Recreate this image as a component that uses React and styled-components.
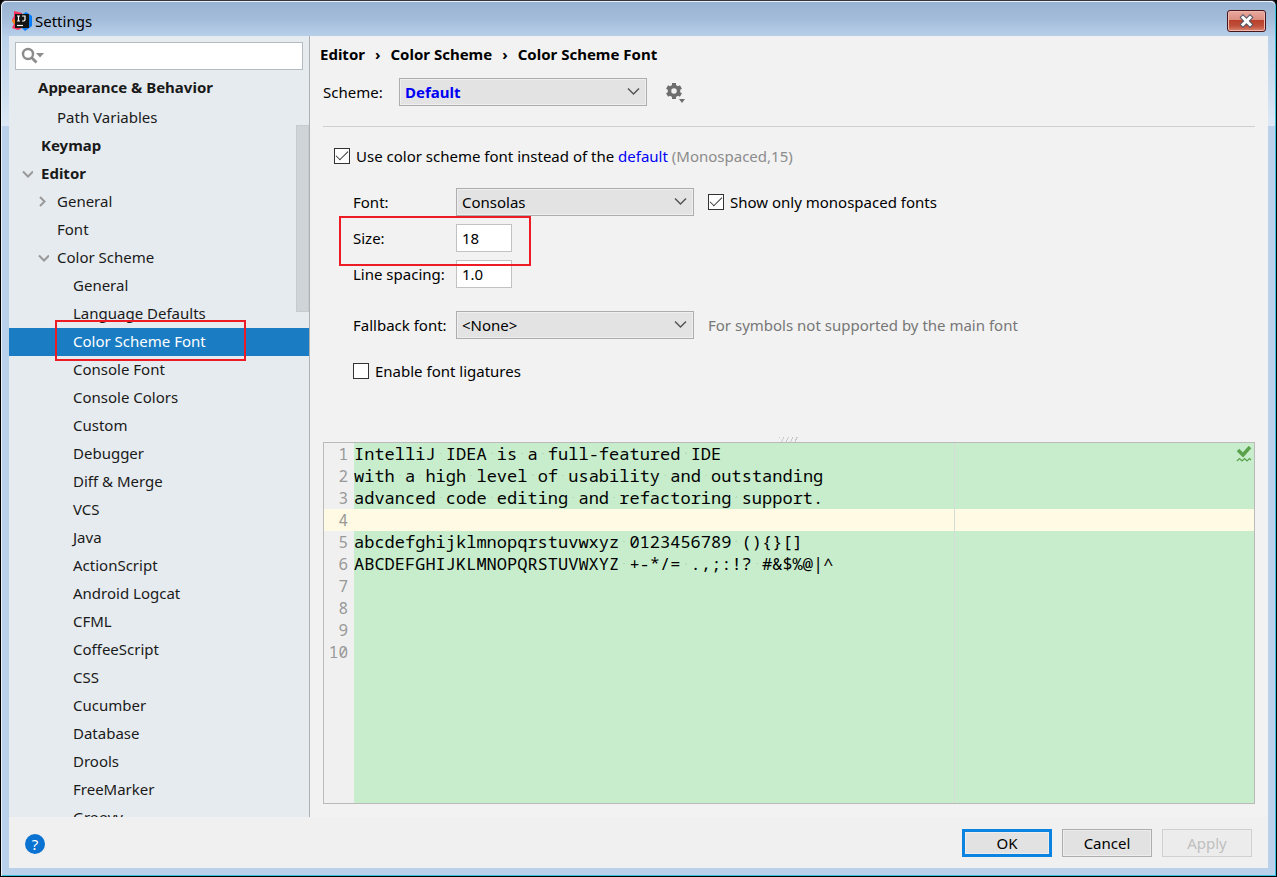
import { useState } from "react"
import styled, { createGlobalStyle, css } from "styled-components"

const GlobalStyle = createGlobalStyle`
  * { box-sizing: border-box; }
  body {
    margin: 0;
    background: #000;
  }
  body, button, input, select {
    font-family: "Noto Sans", "Open Sans", sans-serif;
    font-size: 15px;
    line-height: 20px;
    color: #000;
  }
`

const Window = styled.div`
  height: 100vh;
  display: flex;
  flex-direction: column;
  padding: 0 8px 8px;
  border: 1px solid #000;
  border-top-color: #38333b;
  border-radius: 6px 6px 0 0;
  background: linear-gradient(#b9d1ea, #dce8f5) 0 35px / 100% 90px no-repeat, #b9d1ea;
  box-shadow: inset 1px 1px 0 #e8f1fa, inset -1px -1px 0 #35c2dc;
`

const TitleBar = styled.header`
  flex: none;
  height: 35px;
  margin: 0 -7px;
  padding: 4px 9px 0 10px;
  display: flex;
  align-items: center;
  gap: 3px;
  background: linear-gradient(#98b3d2, #a3bcd9 50%, #b7cfe9);
  border-top: 1px solid #e8f1fa;
  border-radius: 5px 5px 0 0;
`

const Title = styled.h1`
  flex: 1;
  margin: 0;
  font-size: 15px;
  font-weight: 400;
`

const CloseButton = styled.button`
  width: 39px;
  height: 22px;
  padding: 0;
  display: flex;
  align-items: center;
  justify-content: center;
  border: 1px solid #47151c;
  border-radius: 3px;
  background: linear-gradient(#e9a99f, #dc8d80 45%, #b8402b 46%, #c0503a 75%, #dc8571);
  box-shadow: inset 0 0 0 1px #f0b9ae;
`

const Body = styled.div`
  flex: 1;
  min-height: 0;
  display: flex;
  background: #f2f2f2;
`

const Sidebar = styled.nav`
  flex: none;
  width: 301px;
  display: flex;
  flex-direction: column;
  position: relative;
  overflow: hidden;
  padding-top: 6px;
  background: #e6ebef;
  border-right: 1px solid #aeb1b4;
`

const SearchBox = styled.label`
  flex: none;
  height: 28px;
  margin: 0 6px 4px;
  padding-left: 5px;
  display: flex;
  align-items: center;
  background: #fff;
  border: 1px solid #b5bbc0;
`

const SearchInput = styled.input`
  flex: 1;
  min-width: 0;
  height: 24px;
  border: 0;
  outline: 0;
  background: transparent;
`

const Tree = styled.ul`
  flex: 1;
  min-height: 0;
  margin: 0;
  padding: 0;
  list-style: none;
  overflow: hidden;
`

const indents = { top: 29, key: 32, node: 48, leaf: 64 }

const TreeRow = styled.li`
  position: relative;
  height: ${(p) => (p.$level === "top" ? 30 : 28)}px;
  padding: 0 0 ${(p) => (p.$level === "top" ? 4 : 2)}px ${(p) => indents[p.$level]}px;
  display: flex;
  align-items: center;
  white-space: nowrap;
  color: ${(p) => (p.$selected ? "#fff" : "#1a1a1a")};
  font-weight: ${(p) => (p.$level === "top" || p.$level === "key" ? 700 : 400)};
  background: ${(p) => (p.$selected ? "#1a7dc4" : "transparent")};
`

const TreeArrow = styled.svg`
  flex: none;
  width: 12px;
  height: 12px;
  margin-left: -20px;
  margin-right: 8px;
`

const ScrollThumb = styled.div`
  position: absolute;
  top: 89px;
  right: 0;
  width: 13px;
  height: 187px;
  background: #cfd4d8;
  border: 1px solid #c6cbcf;
`

const RedMark = styled.div`
  position: absolute;
  inset: ${(p) => p.$inset};
  width: ${(p) => p.$width}px;
  border: 2px solid #ed1c24;
  pointer-events: none;
  z-index: 1;
`

const Main = styled.main`
  flex: 1;
  min-width: 0;
  display: flex;
  flex-direction: column;
  padding: 8px 13px 13px;
`

const Breadcrumb = styled.h2`
  display: flex;
  gap: 10px;
  margin: 0 0 14px -3px;
  font-size: 15px;
  font-weight: 700;
`

const SchemeRow = styled.div`
  display: flex;
  align-items: center;
  padding-bottom: 20px;
  border-bottom: 1px solid #cfcfcf;
`

const SchemeLabel = styled.label`
  width: 76px;
`

const SelectBox = styled.span`
  position: relative;
  width: ${(p) => p.$width}px;
  svg {
    position: absolute;
    right: 6px;
    top: 9px;
    pointer-events: none;
  }
`

const Select = styled.select`
  appearance: none;
  display: block;
  width: 100%;
  height: 28px;
  padding: 0 24px 0 5px;
  border: 1px solid #adadad;
  border-radius: 0;
  outline: 0;
  background: #e3e3e3;
  box-shadow: inset 0 0 0 1px #efefef;
  ${(p) => p.$strong && css`
    font-weight: 700;
    color: #0000f5;
  `}
`

const GearButton = styled.button`
  display: flex;
  margin-left: 18px;
  padding: 0;
  border: 0;
  background: none;
`

const CheckLabel = styled.label`
  display: flex;
  align-items: center;
  gap: 6px;
  white-space: pre;
`

const CheckInput = styled.input`
  appearance: none;
  flex: none;
  width: 16px;
  height: 16px;
  margin: 0;
  border: 1px solid #333;
  background: #fff;
  display: grid;
  place-items: center;
  &:checked::before {
    content: "";
    width: 11px;
    height: 5px;
    border: solid #333;
    border-width: 0 0 1px 1px;
    transform: translateY(-2px) rotate(-45deg);
  }
`

const DefaultLink = styled.a`
  color: #0000f5;
  text-decoration: none;
`

const Hint = styled.span`
  color: ${(p) => p.$color || "#8c8c8c"};
`

const UseSchemeFont = styled.div`
  padding: 19px 0 22px 11px;
`

const Form = styled.form`
  display: grid;
  grid-template-columns: 103px 1fr;
  row-gap: 8px;
  padding-left: 30px;
  align-items: center;
`

const Field = styled.div`
  display: contents;
`

const FieldLabel = styled.label`
  position: relative;
  white-space: nowrap;
  margin-top: ${(p) => (p.$spaced ? 15 : 0)}px;
`

const FieldValue = styled.div`
  display: flex;
  align-items: center;
  gap: 14px;
  margin-top: ${(p) => (p.$spaced ? 15 : 0)}px;
`

const NumberInput = styled.input`
  width: 56px;
  height: 28px;
  padding: 0 5px;
  border: 1px solid #c2c2c2;
  outline: 0;
  background: #fff;
`

const Ligatures = styled.div`
  padding: 22px 0 0 30px;
`

const Grip = styled.div`
  height: 5px;
  width: 20px;
  margin: 56px auto 0;
  background: repeating-linear-gradient(115deg, #c9c9c9 0 1px, #f2f2f2 1px 4px);
`

const rightMargin = css`
  background-image: linear-gradient(#d5dbd5, #d5dbd5);
  background-size: 1px 100%;
  background-repeat: no-repeat;
`

const Editor = styled.section`
  flex: 1;
  min-height: 0;
  display: flex;
  position: relative;
  border: 1px solid #bababa;
  font-family: "Noto Sans Mono", "DejaVu Sans Mono", monospace;
  font-size: 17px;
  line-height: 22px;
`

const Gutter = styled.div`
  flex: none;
  width: 30px;
  background: #f0f0f0;
  color: #999;
  text-align: right;
`

const LineNumber = styled.div`
  height: 22px;
  padding-right: 6px;
  font-size: 16px;
  background: ${(p) => (p.$caret ? "#fffae3" : "none")};
`

const Code = styled.div`
  flex: 1;
  min-width: 0;
  overflow: hidden;
  background-color: #c7edcc;
  ${rightMargin}
  background-position: 600px 0;
`

const CodeLine = styled.div`
  height: 22px;
  white-space: pre;
  ${(p) => p.$caret && css`
    background-color: #fffae3;
    ${rightMargin}
    background-position: 600px 0;
  `}
`

const Space = styled.span`
  background: radial-gradient(circle, #b4dcba 1px, transparent 1px);
`

const Status = styled.svg`
  position: absolute;
  top: 3px;
  right: 2px;
`

const Footer = styled.footer`
  flex: none;
  height: 51px;
  padding: 0 16px;
  display: flex;
  align-items: center;
  gap: 10px;
  background: #f0f0f0;
`

const HelpButton = styled.button`
  width: 20px;
  height: 20px;
  margin: 3px auto 0 0;
  padding: 0;
  border: 0;
  border-radius: 50%;
  background: #0a72d0;
  color: #fff;
  line-height: 20px;
`

const DialogButton = styled.button`
  width: 90px;
  height: 28px;
  padding: 0;
  border: ${(p) => (p.$primary ? "3px solid #0a84e0" : "1px solid #adadad")};
  background: #e2e2e2;
  box-shadow: inset 0 0 0 1px #ededed;
  &:disabled {
    color: #bfbfbf;
    border-color: #d0d0d0;
    background: #ececec;
  }
`

const settings = [
  { name: "Appearance & Behavior", level: "top" },
  { name: "Path Variables", level: "node" },
  { name: "Keymap", level: "key" },
  { name: "Editor", level: "key", arrow: "down" },
  { name: "General", level: "node", arrow: "right" },
  { name: "Font", level: "node" },
  { name: "Color Scheme", level: "node", arrow: "down" },
  ...[
    "General", "Language Defaults", "Color Scheme Font", "Console Font", "Console Colors",
    "Custom", "Debugger", "Diff & Merge", "VCS", "Java", "ActionScript", "Android Logcat",
    "CFML", "CoffeeScript", "CSS", "Cucumber", "Database", "Drools", "FreeMarker", "Groovy",
  ].map((name) => ({ name, level: "leaf" })),
]

const sample = [
  "IntelliJ IDEA is a full-featured IDE",
  "with a high level of usability and outstanding",
  "advanced code editing and refactoring support.",
  "",
  "abcdefghijklmnopqrstuvwxyz 0123456789 (){}[]",
  "ABCDEFGHIJKLMNOPQRSTUVWXYZ +-*/= .,;:!? #&$%@|^",
  "", "", "", "",
]

const caretLine = 3

const Logo = () => (
  <svg width="20" height="20" viewBox="0 0 20 20" aria-hidden="true">
    <path d="M2 0l8 2v15l-4 2-6-2 2-4-2-4 2-4z" fill="#fe315d" />
    <path d="M0 9l4-1v6l-3-2z" fill="#f97a12" />
    <path d="M11 3l3-2 6 4v10l-7 5-3-3z" fill="#087cfa" />
    <rect x="3" y="3" width="14" height="14" fill="#151515" />
    <path d="M5 5h3M6.500 5v5M5 10h3M10 5h3v4l-1 1h-2" fill="none" stroke="#fff" strokeWidth="1.200" />
    <path d="M5 14.500h6" stroke="#fff" strokeWidth="1.200" />
  </svg>
)

const Arrow = ({ dir }) => (
  <TreeArrow viewBox="0 0 12 12" aria-hidden="true">
    <path d={dir === "down" ? "M2 4.500L7 9.500 12 4.500" : "M3 2L7.500 6.500 3 11"} fill="none" stroke="#999" strokeWidth="2" />
  </TreeArrow>
)

const Dropdown = ({ id, value, width, strong }) => (
  <SelectBox $width={width}>
    <Select id={id} $strong={strong}>
      <option>{value}</option>
    </Select>
    <svg width="14" height="10" viewBox="0 0 14 10" aria-hidden="true">
      <path d="M1 1.500L6.500 7l5.500-5.500" fill="none" stroke="#555" strokeWidth="1.500" />
    </svg>
  </SelectBox>
)

const withDots = (text) =>
  text.split(/( )/).map((part, i) => (part === " " ? <Space key={i}> </Space> : part))

const SettingsTree = () => (
  <Sidebar>
    <SearchBox>
      <svg width="24" height="18" viewBox="0 0 24 18" aria-hidden="true">
        <circle cx="7" cy="7" r="5" fill="none" stroke="#8c8c8c" strokeWidth="2.400" />
        <path d="M10.500 10.500l5 5" stroke="#8c8c8c" strokeWidth="2.800" />
        <path d="M15 6h8l-4 4.500z" fill="#8c8c8c" />
      </svg>
      <SearchInput type="text" aria-label="Search settings" />
    </SearchBox>
    <Tree>
      {settings.map((item, i) => {
        const selected = item.name === "Color Scheme Font"
        return (
          <TreeRow key={i} $level={item.level} $selected={selected}>
            {item.arrow && <Arrow dir={item.arrow} />}
            {item.name}
            {selected && <RedMark $inset="-8px auto -5px 46px" $width={191} />}
          </TreeRow>
        )
      })}
    </Tree>
    <ScrollThumb />
  </Sidebar>
)

const FontForm = () => {
  const [size, setSize] = useState("18")
  const [spacing, setSpacing] = useState("1.0")
  return (
    <Form>
      <Field>
        <FieldLabel htmlFor="font">Font:</FieldLabel>
        <FieldValue>
          <Dropdown id="font" value="Consolas" width={238} />
          <CheckLabel>
            <CheckInput type="checkbox" defaultChecked />
            Show only monospaced fonts
          </CheckLabel>
        </FieldValue>
      </Field>
      <Field>
        <FieldLabel htmlFor="size">
          Size:
          <RedMark $inset="-12px auto -18px -14px" $width={192} />
        </FieldLabel>
        <FieldValue>
          <NumberInput id="size" value={size} onChange={(e) => setSize(e.target.value)} />
        </FieldValue>
      </Field>
      <Field>
        <FieldLabel htmlFor="spacing">Line spacing:</FieldLabel>
        <FieldValue>
          <NumberInput id="spacing" value={spacing} onChange={(e) => setSpacing(e.target.value)} />
        </FieldValue>
      </Field>
      <Field>
        <FieldLabel htmlFor="fallback" $spaced>Fallback font:</FieldLabel>
        <FieldValue $spaced>
          <Dropdown id="fallback" value="<None>" width={238} />
          <Hint $color="#777">For symbols not supported by the main font</Hint>
        </FieldValue>
      </Field>
    </Form>
  )
}

const Preview = () => (
  <Editor>
    <Gutter>
      {sample.map((_, i) => (
        <LineNumber key={i} $caret={i === caretLine}>{i + 1}</LineNumber>
      ))}
    </Gutter>
    <Code>
      {sample.map((text, i) => (
        <CodeLine key={i} $caret={i === caretLine}>{withDots(text)}</CodeLine>
      ))}
    </Code>
    <Status width="16" height="17" viewBox="0 0 16 17" aria-hidden="true">
      <path d="M2 4l5 5 7-8" fill="none" stroke="#59a14a" strokeWidth="3.500" />
      <path d="M1 15l2.500-2.500L6 15l2.500-2.500L11 15l2.500-2.500L15 14" fill="none" stroke="#59a14a" strokeWidth="1.200" />
    </Status>
  </Editor>
)

const App = () => (
  <>
    <GlobalStyle />
    <Window>
      <TitleBar>
        <Logo />
        <Title>Settings</Title>
        <CloseButton aria-label="Close">
          <svg width="16" height="14" viewBox="0 0 16 14" aria-hidden="true">
            <path d="M4 3.500l7 7M11 3.500l-7 7" stroke="#555766" strokeWidth="5" strokeLinecap="square" />
            <path d="M4 3.500l7 7M11 3.500l-7 7" stroke="#fff" strokeWidth="3" strokeLinecap="square" />
          </svg>
        </CloseButton>
      </TitleBar>
      <Body>
        <SettingsTree />
        <Main>
          <Breadcrumb>
            <span>Editor</span>
            <span>›</span>
            <span>Color Scheme</span>
            <span>›</span>
            <span>Color Scheme Font</span>
          </Breadcrumb>
          <SchemeRow>
            <SchemeLabel htmlFor="scheme">Scheme:</SchemeLabel>
            <Dropdown id="scheme" value="Default" width={248} strong />
            <GearButton aria-label="Scheme actions">
              <svg width="22" height="22" viewBox="0 0 22 22" aria-hidden="true">
                <g fill="#6e6e6e">
                  <path d="M7 2h4v4H7zM7 14h4v4H7z" />
                  <path d="M7 2h4v4H7zM7 14h4v4H7z" transform="rotate(60 9 10)" />
                  <path d="M7 2h4v4H7zM7 14h4v4H7z" transform="rotate(120 9 10)" />
                  <path d="M14 18h6l-3 4z" />
                </g>
                <circle cx="9" cy="10" r="4.500" fill="none" stroke="#6e6e6e" strokeWidth="3.500" />
              </svg>
            </GearButton>
          </SchemeRow>
          <UseSchemeFont>
            <CheckLabel>
              <CheckInput type="checkbox" defaultChecked />
              <span>
                Use color scheme font instead of the <DefaultLink href="#font">default</DefaultLink>{" "}
                <Hint>(Monospaced,15)</Hint>
              </span>
            </CheckLabel>
          </UseSchemeFont>
          <FontForm />
          <Ligatures>
            <CheckLabel>
              <CheckInput type="checkbox" />
              Enable font ligatures
            </CheckLabel>
          </Ligatures>
          <Grip />
          <Preview />
        </Main>
      </Body>
      <Footer>
        <HelpButton aria-label="Help">?</HelpButton>
        <DialogButton $primary>OK</DialogButton>
        <DialogButton>Cancel</DialogButton>
        <DialogButton disabled>Apply</DialogButton>
      </Footer>
    </Window>
  </>
)

export default App
